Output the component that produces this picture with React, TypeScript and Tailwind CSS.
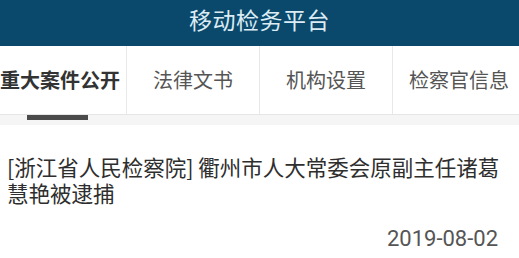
const TABS = ["重大案件公开", "法律文书", "机构设置", "检察官信息"];

export default function App() {
  return (
    <div
      className="w-[519px] h-[258px] overflow-hidden bg-white"
      style={{ fontFamily: '"Noto Sans CJK SC", "Noto Sans", sans-serif' }}
    >
      {/* Header */}
      <div className="h-[46px] bg-[#0b496c] flex justify-center pt-[3px]">
        <h1 className="text-[23px] leading-[32px] text-[#dcecf4] tracking-[0.5px]">移动检务平台</h1>
      </div>

      {/* Tabs */}
      <div className="h-[69px] border-b border-[#e6e6e6] overflow-hidden">
        <div className="flex h-full ml-[-6px]">
          {TABS.map((t, i) => (
            <div
              key={t}
              className="relative w-[133px] shrink-0 h-full flex items-center justify-center border-r border-[#e8e8e8]"
            >
              <span
                className={
                  i === 0
                    ? "text-[20px] font-bold text-[#333333]"
                    : "text-[20px] text-[#555555]"
                }
              >
                {t}
              </span>
            </div>
          ))}
        </div>
      </div>

      {/* Indicator + gray strip */}
      <div className="relative h-[10px] bg-[#f5f5f5]">
        <div className="absolute left-[27px] top-0 w-[61px] h-[5px] bg-[#4b4b4b]" />
      </div>

      {/* Card */}
      <div className="pl-[7px] pr-[14px] pt-[29px]">
        <p className="text-[21.5px] leading-[26px] text-[#2e2e2e]">
          [浙江省人民检察院] 衢州市人大常委会原副主任诸葛慧艳被逮捕
        </p>
        <div className="flex justify-end pr-[7px] mt-[20px]">
          <span
            className="text-[22px] leading-[26px] text-[#555555]"
            style={{ fontFamily: 'Roboto, "Noto Sans", sans-serif' }}
          >
            2019-08-02
          </span>
        </div>
      </div>
    </div>
  );
}
